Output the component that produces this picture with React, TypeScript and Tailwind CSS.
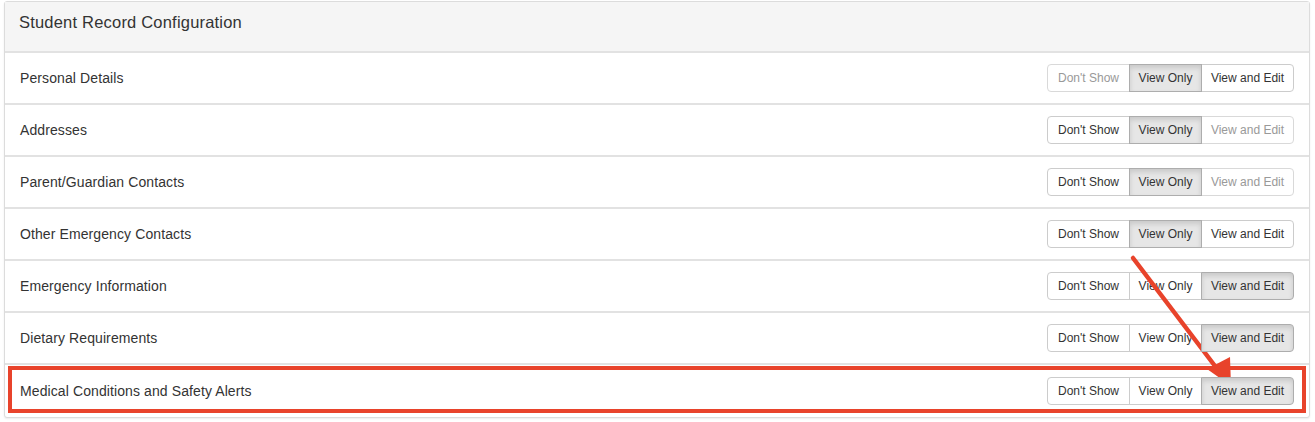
type Mode = "normal" | "active" | "disabled";

const rows: { label: string; states: [Mode, Mode, Mode] }[] = [
  { label: "Personal Details", states: ["disabled", "active", "normal"] },
  { label: "Addresses", states: ["normal", "active", "disabled"] },
  { label: "Parent/Guardian Contacts", states: ["normal", "active", "disabled"] },
  { label: "Other Emergency Contacts", states: ["normal", "active", "normal"] },
  { label: "Emergency Information", states: ["normal", "normal", "active"] },
  { label: "Dietary Requirements", states: ["normal", "normal", "active"] },
  { label: "Medical Conditions and Safety Alerts", states: ["normal", "normal", "active"] },
];

const labels = ["Don't Show", "View Only", "View and Edit"];
const widths = ["w-[83px]", "w-[73px]", "w-[93px]"];

const Btn = ({ text, mode, idx }: { text: string; mode: Mode; idx: number }) => {
  const shape =
    idx === 0 ? "rounded-l-[4px]" : idx === 2 ? "rounded-r-[4px] -ml-px" : "-ml-px";
  const look =
    mode === "active"
      ? "bg-[#e6e6e6] border-[#adadad] text-[#333] shadow-[inset_0_3px_5px_rgba(0,0,0,0.125)] z-10"
      : mode === "disabled"
        ? "bg-white border-[#d9d9d9] text-[#999]"
        : "bg-white border-[#ccc] text-[#333]";
  return (
    <div
      className={`relative flex h-[28px] items-center justify-center border text-[12px] ${widths[idx]} ${shape} ${look}`}
    >
      {text}
    </div>
  );
};

const Row = ({ label, states, last }: { label: string; states: [Mode, Mode, Mode]; last?: boolean }) => (
  <div className={`relative flex h-[52px] items-center justify-between pl-[15px] pr-[15px] ${last ? "" : "border-b-2 border-[#e2e2e2]"}`}>
    <span className="text-[14px] tracking-[0.1px] text-[#333]">{label}</span>
    <div className="flex">
      {states.map((m, i) => (
        <Btn key={i} text={labels[i]} mode={m} idx={i} />
      ))}
    </div>
    {last && (
      <div className="pointer-events-none absolute left-[3px] top-[1px] h-[47px] w-[1298px] border-4 border-[#e8432b]" />
    )}
  </div>
);

export default function App() {
  return (
    <div className="relative h-[422px] w-[1315px] bg-white font-['Liberation_Sans',Arial,sans-serif]">
      <div className="absolute left-[4px] top-[1px] w-[1306px] rounded-[3px] border border-[#dcdcdc] bg-white shadow-[0_1px_2px_rgba(0,0,0,0.08)]">
        <div className="flex h-[51px] items-start border-b-2 border-[#e2e2e2] bg-[#f5f5f5] px-[14px] pt-[8px] text-[16.5px] font-medium tracking-[0.2px] text-[#333]">
          Student Record Configuration
        </div>
        {rows.map((r, i) => (
          <Row key={r.label} label={r.label} states={r.states} last={i === rows.length - 1} />
        ))}
      </div>
      <svg className="pointer-events-none absolute left-0 top-0" width="1315" height="422">
        <line x1="1133" y1="258" x2="1218" y2="370" stroke="#e8432b" strokeWidth="4.5" strokeLinecap="round" />
        <polygon points="1231,386 1207,369 1230,357" fill="#e8432b" />
      </svg>
    </div>
  );
}
